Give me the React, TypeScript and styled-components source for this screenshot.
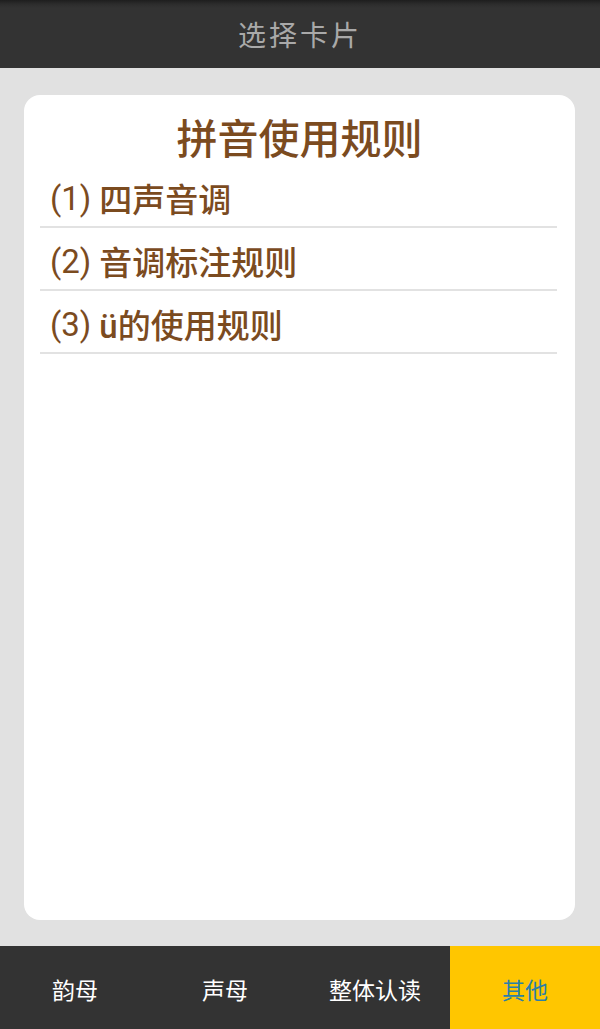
import styled, { createGlobalStyle } from 'styled-components';

const GlobalStyle = createGlobalStyle`
  html, body {
    margin: 0;
    padding: 0;
    background: #e1e1e1;
  }
  * {
    box-sizing: border-box;
  }
`;

const rules = [
  { num: '(1)', label: '四声音调' },
  { num: '(2)', label: '音调标注规则' },
  { num: '(3)', label: 'ü的使用规则' },
];
const tabs = ['韵母', '声母', '整体认读', '其他'];

const App = () => {
  const activeTab = 3;

  return (
    <Page>
      <GlobalStyle />
      <Header>
        <HeaderTitle>选择卡片</HeaderTitle>
      </Header>
      <Main>
        <Card>
          <CardTitle>拼音使用规则</CardTitle>
          <RuleList>
            {rules.map((rule) => (
              <RuleRow key={rule.num}>
                <RuleNum>{rule.num}</RuleNum>
                <RuleLabel>{rule.label}</RuleLabel>
              </RuleRow>
            ))}
          </RuleList>
        </Card>
      </Main>
      <TabBar>
        {tabs.map((tab, i) => (
          <Tab key={tab} $active={i === activeTab}>
            {tab}
          </Tab>
        ))}
      </TabBar>
    </Page>
  );
};

export default App;

const Page = styled.div`
  display: flex;
  flex-direction: column;
  width: 600px;
  height: 1029px;
  background: #e1e1e1;
  font-family: Roboto, 'Noto Sans CJK SC', sans-serif;
`;

const Header = styled.header`
  height: 68px;
  display: flex;
  align-items: center;
  justify-content: center;
  background: linear-gradient(#1e1e1e 0px, #2c2c2c 4px, #333333 8px, #333333 100%);
`;

const HeaderTitle = styled.h1`
  margin: 0;
  font-size: 28px;
  font-weight: 400;
  color: #a9a9a9;
  letter-spacing: 3px;
  font-family: 'Noto Sans CJK SC', sans-serif;
`;

const Main = styled.main`
  flex: 1;
  display: flex;
  padding: 27px 25px 26px 24px;
`;

const Card = styled.section`
  flex: 1;
  background: #ffffff;
  border-radius: 16px;
  padding-top: 20px;
`;

const CardTitle = styled.h2`
  margin: 0;
  height: 50px;
  line-height: 50px;
  text-align: center;
  font-size: 41px;
  font-weight: 500;
  color: #7b4b1f;
`;

const RuleList = styled.div`
  display: flex;
  flex-direction: column;
  margin: 0 18px 0 16px;
`;

const RuleRow = styled.div`
  height: 63px;
  display: flex;
  align-items: center;
  gap: 8px;
  padding: 5px 0 0 10px;
  border-bottom: 2px solid #e2e2e2;
  font-size: 33px;
  color: #7b4b1f;
`;

const RuleNum = styled.span`
  font-weight: 400;
`;

const RuleLabel = styled.span`
  font-weight: 500;
`;

const TabBar = styled.nav`
  height: 83px;
  display: grid;
  grid-template-columns: repeat(4, 1fr);
  background: #333333;
`;

const Tab = styled.div<{ $active: boolean }>`
  display: flex;
  align-items: center;
  justify-content: center;
  padding-top: 2px;
  font-size: 23px;
  font-weight: 400;
  color: ${(p) => (p.$active ? '#2b7fa8' : '#ffffff')};
  background: ${(p) => (p.$active ? '#ffc600' : 'transparent')};
`;
